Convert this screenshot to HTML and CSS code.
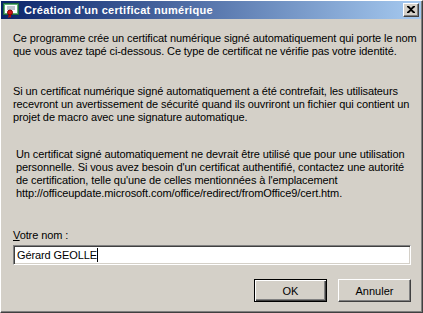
FILE: index.html
```html
<!DOCTYPE html>
<html lang="fr">
<head>
<meta charset="utf-8">
<title>Création d'un certificat numérique</title>
<link rel="stylesheet" href="styles.css">
</head>
<body>
<div class="window">
  <div class="titlebar">
    <svg class="ticon" width="16" height="16" viewBox="0 0 16 16">
      <rect x="0.5" y="1.5" width="15" height="11" fill="#ffffff" stroke="#1f6b3a"/>
      <rect x="1.5" y="2.5" width="13" height="9" fill="none" stroke="#5fb07a"/>
      <line x1="4" y1="5" x2="12" y2="5" stroke="#7a8a9a"/>
      <line x1="4" y1="7" x2="12" y2="7" stroke="#7a8a9a"/>
      <path d="M6 12 L5 16 L7 15 L8 16 L8 12 Z" fill="#b01010"/>
      <circle cx="7" cy="10.5" r="2.5" fill="#d01818" stroke="#800000"/>
    </svg>
    <span class="ttext">Création d'un certificat numérique</span>
    <div class="close">
      <svg width="8" height="7" viewBox="0 0 8 7"><path d="M0 0h2l2 2 2-2h2v1L5 3.5 8 6v1H6L4 5 2 7H0V6l3-2.5L0 1z" fill="#000"/></svg>
    </div>
  </div>
  <div class="content">
    <p class="para p1">Ce programme crée un certificat numérique signé automatiquement qui porte le nom<br>que vous avez tapé ci-dessous. Ce type de certificat ne vérifie pas votre identité.</p>
    <p class="para p2">Si un certificat numérique signé automatiquement a été contrefait, les utilisateurs<br>recevront un avertissement de sécurité quand ils ouvriront un fichier qui contient un<br>projet de macro avec une signature automatique.</p>
    <p class="para p3">Un certificat signé automatiquement ne devrait être utilisé que pour une utilisation<br>personnelle. Si vous avez besoin d'un certificat authentifié, contactez une autorité<br>de certification, telle qu'une de celles mentionnées à l'emplacement<br>http://officeupdate.microsoft.com/office/redirect/fromOffice9/cert.htm.</p>
    <label class="lbl"><u>V</u>otre nom :</label>
    <div class="input"><span class="val">Gérard GEOLLE</span><span class="caret"></span></div>
    <div class="buttons">
      <div class="btn default"><span>OK</span></div>
      <div class="btn"><span>Annuler</span></div>
    </div>
  </div>
</div>
</body>
</html>
```

FILE: styles.css
```css
html, body {
  margin: 0;
  padding: 0;
  background: #d4d0c8;
}
.window {
  width: 423px;
  height: 313px;
  box-sizing: border-box;
  background: #d4d0c8;
  border-top: 1px solid #ffffff;
  border-left: 1px solid #ffffff;
  border-right: 1px solid #404040;
  border-bottom: 1px solid #404040;
  box-shadow: inset -1px -1px 0 #808080;
  display: flex;
  flex-direction: column;
  font-family: "Liberation Sans", Arial, sans-serif;
  font-size: 11px;
  color: #000;
  overflow: hidden;
}
.titlebar {
  height: 18px;
  margin: 0 1px 0 0;
  background: linear-gradient(to right, #0a246a, #a6caf0);
  display: flex;
  align-items: center;
  padding-left: 2px;
}
.ticon {
  flex: none;
  margin-right: 5px;
}
.ttext {
  color: #fff;
  font-weight: bold;
  font-family: "Liberation Sans", Arial, sans-serif;
  font-size: 11px;
  letter-spacing: 0.3px;
  white-space: nowrap;
  flex: 1;
}
.close {
  width: 16px;
  height: 14px;
  box-sizing: border-box;
  background: #d4d0c8;
  border-top: 1px solid #fff;
  border-left: 1px solid #fff;
  border-right: 1px solid #404040;
  border-bottom: 1px solid #404040;
  box-shadow: inset -1px -1px 0 #808080;
  display: flex;
  align-items: center;
  justify-content: center;
  margin-right: 2px;
  padding: 0 1px 1px 0;
}
.close svg { display: block; }
.content {
  flex: 1;
  padding: 13px 11px 0 12px;
  letter-spacing: -0.1px;
}
.para {
  margin: 0;
  line-height: 13px;
  white-space: nowrap;
}
.p2 { margin-top: 27px; }
.p3 { margin-top: 24px; padding-left: 3px; }
.lbl {
  display: block;
  margin-top: 29px;
  line-height: 13px;
}
.input {
  margin-top: 3px;
  height: 20px;
  box-sizing: border-box;
  background: #fff;
  border-top: 1px solid #808080;
  border-left: 1px solid #808080;
  border-right: 1px solid #fff;
  border-bottom: 1px solid #fff;
  box-shadow: inset 1px 1px 0 #404040, inset -1px -1px 0 #d4d0c8;
  display: flex;
  align-items: center;
  padding-left: 3px;
}
.caret {
  width: 1px;
  height: 14px;
  background: #000;
}
.buttons {
  display: flex;
  justify-content: flex-end;
  gap: 11px;
  margin-top: 14px;
  letter-spacing: 0;
}
.btn {
  width: 73px;
  height: 23px;
  box-sizing: border-box;
  border-top: 1px solid #fff;
  border-left: 1px solid #fff;
  border-right: 1px solid #404040;
  border-bottom: 1px solid #404040;
  box-shadow: inset -1px -1px 0 #808080;
  display: flex;
  align-items: center;
  justify-content: center;
}
.btn.default {
  border: 1px solid #000;
  box-shadow: inset 1px 1px 0 #fff, inset -1px -1px 0 #404040, inset -2px -2px 0 #808080;
}
```
